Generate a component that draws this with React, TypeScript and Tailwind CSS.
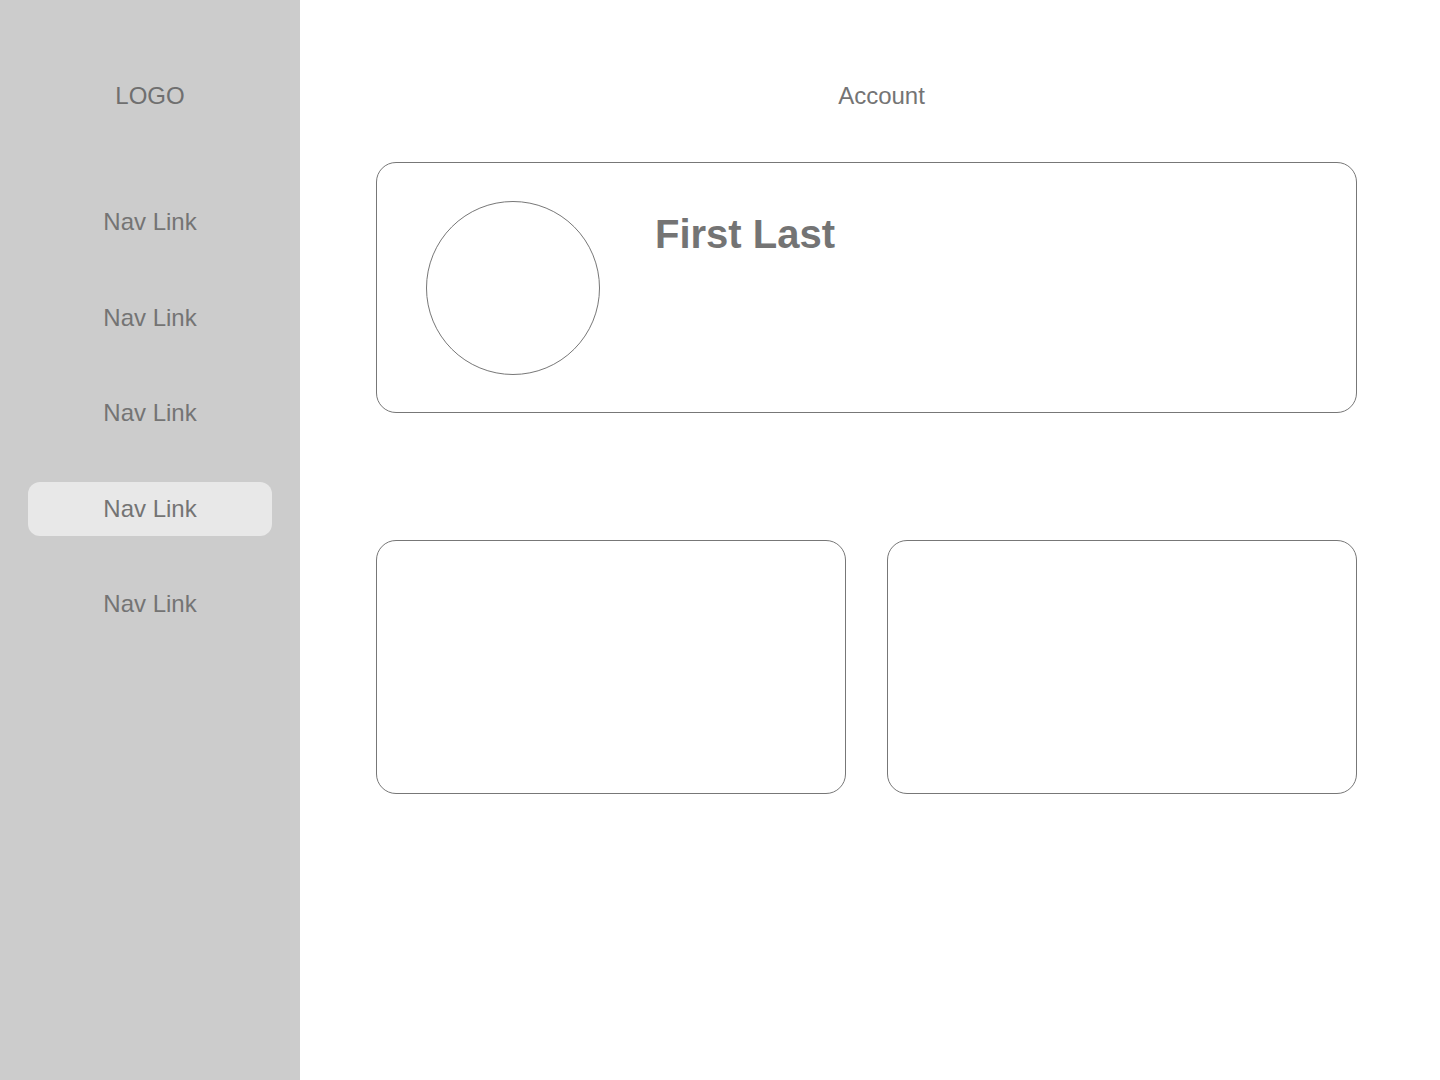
export default function App() {
  const links = ["Nav Link", "Nav Link", "Nav Link", "Nav Link", "Nav Link"];
  return (
    <div
      className="flex w-[1440px] h-[1080px] bg-white text-[#747474]"
      style={{ fontFamily: '"Liberation Sans", Arial, sans-serif' }}
    >
      <aside className="w-[300px] shrink-0 bg-[#cccccc] flex flex-col items-center pt-[82px]">
        <div className="text-[24px] leading-[28px] text-[#6f6f6f]">LOGO</div>
        <nav className="mt-[85px] flex flex-col gap-[41.5px] w-full px-[28px]">
          {links.map((l, i) => (
            <div
              key={i}
              className={
                "h-[54px] flex items-center justify-center rounded-[12px] text-[24px] " +
                (i === 3 ? "bg-[#e8e8e8]" : "")
              }
            >
              {l}
            </div>
          ))}
        </nav>
      </aside>
      <main className="flex-1 pl-[76px] pr-[83px] pt-[82px]">
        <div className="text-[24px] leading-[28px] text-center pl-[30px]">Account</div>
        <section className="mt-[52px] h-[251px] border border-[#777777] rounded-[20px] flex pl-[49px] pt-[38px]">
          <div className="w-[174px] h-[174px] rounded-full border border-[#777777] shrink-0" />
          <h1 className="ml-[55px] mt-[10px] text-[40px] leading-[46px] font-bold text-[#747474]">
            First Last
          </h1>
        </section>
        <div className="mt-[127px] grid grid-cols-2 gap-[41px]">
          <div className="h-[254px] border border-[#777777] rounded-[20px]" />
          <div className="h-[254px] border border-[#777777] rounded-[20px]" />
        </div>
      </main>
    </div>
  );
}
